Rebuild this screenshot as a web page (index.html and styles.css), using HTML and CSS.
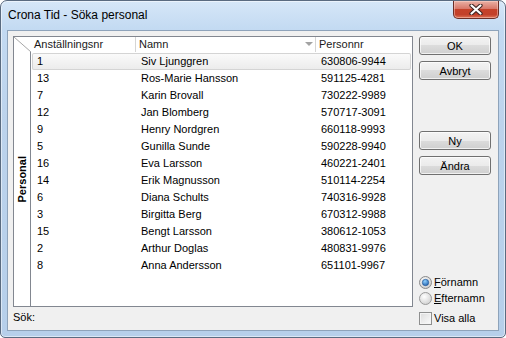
FILE: index.html
```html
<!DOCTYPE html>
<html lang="sv">
<head>
<meta charset="UTF-8">
<title>Crona Tid - Söka personal</title>
<link rel="stylesheet" href="styles.css">
</head>
<body>
<div class="window">
    <div class="titlebar">
        <span class="title">Crona Tid - Söka personal</span>
        <div class="close">
            <svg width="14" height="11" viewBox="0 0 14 11">
                <path d="M2.5 1.5 L11.5 9.5 M11.5 1.5 L2.5 9.5" stroke="#3b2320" stroke-width="4.2" stroke-linecap="round"/>
                <path d="M2.5 1.5 L11.5 9.5 M11.5 1.5 L2.5 9.5" stroke="#ffffff" stroke-width="2.2" stroke-linecap="round"/>
            </svg>
        </div>
    </div>
    <div class="client">
        <div class="left">
            <div class="grid">
                <div class="corner">
                    <svg width="17" height="15"><line x1="0" y1="0" x2="17" y2="15" stroke="#a7a7a7" stroke-width="1"/></svg>
                </div>
                <div class="header">
                    <div class="hcell c1">Anställningsnr</div>
                    <div class="hcell c2"><span>Namn</span><span class="sort"></span></div>
                    <div class="hcell c3">Personnr</div>
                </div>
                <div class="gutter"><span>Personal</span></div>
                <div class="rows" id="rows"></div>
            </div>
            <div class="search">Sök:</div>
        </div>
        <div class="panel">
            <button class="btn">OK</button>
            <button class="btn gap-s">Avbryt</button>
            <button class="btn gap-l">Ny</button>
            <button class="btn gap-s">Ändra</button>
            <div class="options">
                <div class="opt">
                    <svg class="radio" width="13" height="13">
                        <defs><radialGradient id="rg1" cx="0.4" cy="0.35" r="0.7"><stop offset="0" stop-color="#ffffff"/><stop offset="1" stop-color="#c9c9c9"/></radialGradient>
                        <radialGradient id="dot" cx="0.4" cy="0.3" r="0.8"><stop offset="0" stop-color="#8fd0ff"/><stop offset="1" stop-color="#1a5aa8"/></radialGradient></defs>
                        <circle cx="6.5" cy="6.5" r="6" fill="url(#rg1)" stroke="#8b8b8b"/>
                        <circle cx="6.5" cy="6.5" r="3.2" fill="url(#dot)" stroke="#1c4f8f" stroke-width="0.6"/>
                    </svg>
                    <span><u>F</u>örnamn</span>
                </div>
                <div class="opt">
                    <svg class="radio" width="13" height="13">
                        <defs><radialGradient id="rg2" cx="0.4" cy="0.35" r="0.7"><stop offset="0" stop-color="#ffffff"/><stop offset="1" stop-color="#cfcfcf"/></radialGradient></defs>
                        <circle cx="6.5" cy="6.5" r="6" fill="url(#rg2)" stroke="#9a9a9a"/>
                    </svg>
                    <span><u>E</u>fternamn</span>
                </div>
                <div class="opt check">
                    <span class="box"></span>
                    <span>Visa alla</span>
                </div>
            </div>
        </div>
    </div>
</div>

<script>
    // Personal list
    const people = [
        ["1", "Siv Ljunggren", "630806-9944"],
        ["13", "Ros-Marie Hansson", "591125-4281"],
        ["7", "Karin Brovall", "730222-9989"],
        ["12", "Jan Blomberg", "570717-3091"],
        ["9", "Henry Nordgren", "660118-9993"],
        ["5", "Gunilla Sunde", "590228-9940"],
        ["16", "Eva Larsson", "460221-2401"],
        ["14", "Erik Magnusson", "510114-2254"],
        ["6", "Diana Schults", "740316-9928"],
        ["3", "Birgitta Berg", "670312-9988"],
        ["15", "Bengt Larsson", "380612-1053"],
        ["2", "Arthur Doglas", "480831-9976"],
        ["8", "Anna Andersson", "651101-9967"]
    ];
    let html = '';
    people.forEach((p, i) => {
        html += `<div class="row${i === 0 ? ' sel' : ''}">
                    <div class="cell c1">${p[0]}</div>
                    <div class="cell c2">${p[1]}</div>
                    <div class="cell c3">${p[2]}</div>
                 </div>`;
    });
    document.getElementById('rows').innerHTML = html;
</script>
</body>
</html>
```

FILE: styles.css
```css
* {
    box-sizing: border-box;
}

body {
    margin: 0;
    font-family: "Liberation Sans", Arial, sans-serif;
    font-size: 11px;
    color: #000;
    background: #fff;
}

.window {
    width: 506px;
    height: 338px;
    border: 1px solid #5a6b80;
    border-radius: 7px 7px 5px 5px;
    background: linear-gradient(to bottom, #d6e7f8 0, #c3daf2 28px, #bcd3ec 120px, #b6cfea 100%);
    box-shadow: inset 0 0 0 1px rgba(255, 255, 255, 0.5);
    padding: 0 6px 6px;
    display: flex;
    flex-direction: column;
}

.titlebar {
    height: 29px;
    display: flex;
    justify-content: space-between;
    align-items: flex-start;
}

.title {
    font-size: 12px;
    line-height: 14px;
    margin: 7px 0 0 1px;
}

.close {
    width: 46px;
    height: 18px;
    border: 1px solid #6b2e27;
    border-top: none;
    border-radius: 0 0 5px 5px;
    background: linear-gradient(to bottom, #eab1a5 0, #d8786a 45%, #c54129 50%, #c2402a 80%, #de7356 100%);
    box-shadow: inset 0 0 0 1px rgba(255, 220, 210, 0.45);
    display: flex;
    align-items: center;
    justify-content: center;
}

.client {
    flex: 1;
    border: 1px solid #8ea3ba;
    background: #f0f0f0;
    display: flex;
    gap: 6px;
    padding: 5px 6px 2px 5px;
}

.left {
    width: 400px;
    display: flex;
    flex-direction: column;
}

/* grid */
.grid {
    height: 271px;
    border: 1px solid #828790;
    background: #fff;
    display: grid;
    grid-template-columns: 17px 1fr;
    grid-template-rows: 15px 1fr;
}

.corner svg {
    display: block;
}

.header {
    display: flex;
    color: #1a1a1a;
}

.hcell {
    height: 15px;
    line-height: 14px;
    padding-left: 3px;
    border-right: 1px solid #d5d5d5;
}

.hcell.c1 {
    width: 105px;
}

.hcell.c2 {
    width: 180px;
    display: flex;
    justify-content: space-between;
    align-items: flex-start;
    padding-right: 2px;
}

.hcell.c3 {
    flex: 1;
    border-right: none;
}

.sort {
    width: 0;
    height: 0;
    margin-top: 5px;
    border-left: 4px solid transparent;
    border-right: 4px solid transparent;
    border-top: 4px solid #a3a3a3;
}

.gutter {
    border-right: 1px solid #828790;
    display: flex;
    align-items: center;
    justify-content: center;
}

.gutter span {
    writing-mode: vertical-rl;
    transform: rotate(180deg);
    font-weight: bold;
    line-height: 13px;
}

.rows {
    padding-top: 1px;
}

.row {
    display: flex;
    height: 17px;
    line-height: 17px;
    margin: 0 1px;
}

.row.sel {
    border-radius: 2px;
    background: linear-gradient(to bottom, #fbfbfb, #ebebeb);
    box-shadow: inset 0 0 0 1px #d4d4d4;
}

.cell {
    padding-left: 5px;
    white-space: nowrap;
}

.cell.c1 {
    width: 104px;
}

.cell.c2 {
    width: 180px;
}

.cell.c3 {
    flex: 1;
}

.search {
    height: 20px;
    line-height: 20px;
}

/* right panel */
.panel {
    width: 72px;
    display: flex;
    flex-direction: column;
}

.btn {
    height: 19px;
    padding: 0;
    font-family: inherit;
    font-size: 11px;
    color: #000;
    border: 1px solid #707070;
    border-radius: 3px;
    background: linear-gradient(to bottom, #f3f3f3 0, #ebebeb 50%, #dcdcdc 50%, #cfcfcf 100%);
    box-shadow: inset 0 0 0 1px rgba(255, 255, 255, 0.7);
}

.gap-s {
    margin-top: 6px;
}

.gap-l {
    margin-top: 51px;
}

.options {
    margin-top: auto;
}

.opt {
    height: 16px;
    display: flex;
    align-items: center;
    gap: 2px;
}

.opt.check {
    height: 20px;
    margin-top: 2px;
}

.box {
    width: 13px;
    height: 13px;
    border: 1px solid #8e8f8f;
    background: linear-gradient(135deg, #dcdcdc, #fbfbfb);
    box-shadow: inset 0 0 0 1px #f4f4f4;
}
```
